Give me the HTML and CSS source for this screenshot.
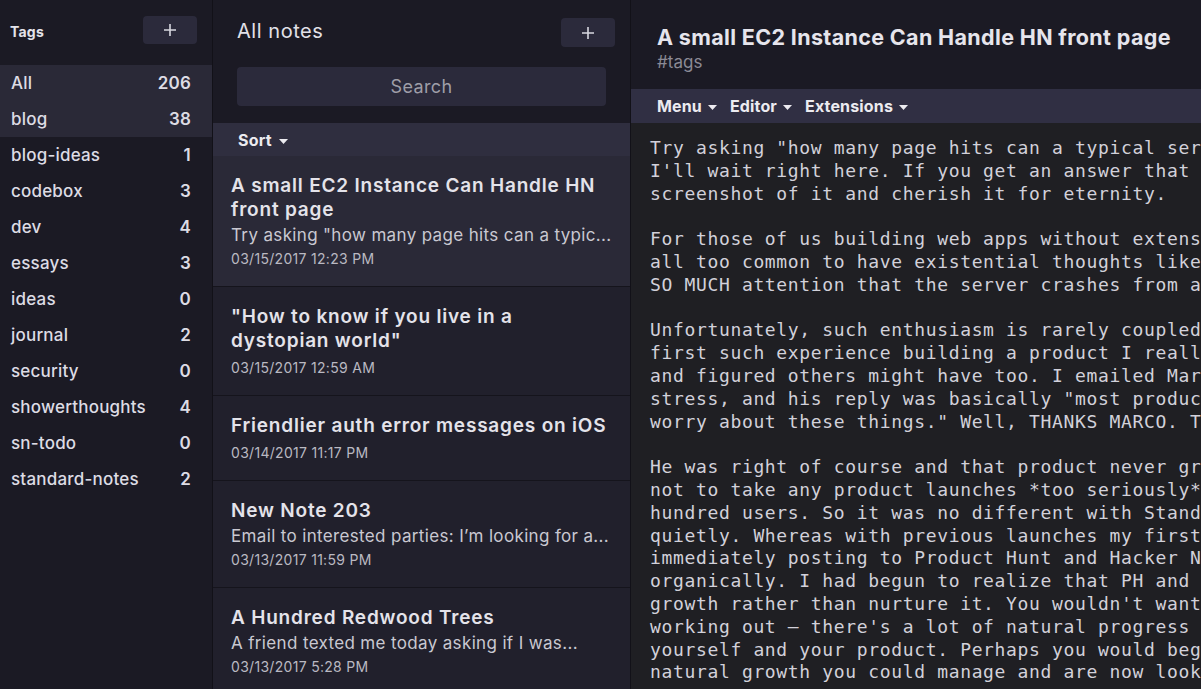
FILE: index.html
```html
<!DOCTYPE html>
<html lang="en">
<head>
<meta charset="utf-8">
<title>Notes</title>
<link rel="stylesheet" href="styles.css">
</head>
<body>
<div class="app">
  <aside class="tags">
    <div class="tags-head">
      <span class="tags-title">Tags</span>
      <button class="add add-tag" aria-label="Add tag"><svg width="14" height="14" viewBox="0 0 14 14"><path d="M7 1v12M1 7h12" stroke="currentColor" stroke-width="1.6"/></svg></button>
    </div>
    <ul class="tag-list">
      <li class="tag selected"><span class="tag-name">All</span><span class="tag-count">206</span></li>
      <li class="tag selected"><span class="tag-name">blog</span><span class="tag-count">38</span></li>
      <li class="tag"><span class="tag-name">blog-ideas</span><span class="tag-count">1</span></li>
      <li class="tag"><span class="tag-name">codebox</span><span class="tag-count">3</span></li>
      <li class="tag"><span class="tag-name">dev</span><span class="tag-count">4</span></li>
      <li class="tag"><span class="tag-name">essays</span><span class="tag-count">3</span></li>
      <li class="tag"><span class="tag-name">ideas</span><span class="tag-count">0</span></li>
      <li class="tag"><span class="tag-name">journal</span><span class="tag-count">2</span></li>
      <li class="tag"><span class="tag-name">security</span><span class="tag-count">0</span></li>
      <li class="tag"><span class="tag-name">showerthoughts</span><span class="tag-count">4</span></li>
      <li class="tag"><span class="tag-name">sn-todo</span><span class="tag-count">0</span></li>
      <li class="tag"><span class="tag-name">standard-notes</span><span class="tag-count">2</span></li>
    </ul>
  </aside>

  <section class="notes">
    <div class="notes-head">
      <div class="notes-top">
        <h2 class="notes-title">All notes</h2>
        <button class="add add-note" aria-label="New note"><svg width="14" height="14" viewBox="0 0 14 14"><path d="M7 1v12M1 7h12" stroke="currentColor" stroke-width="1.6"/></svg></button>
      </div>
      <div class="search">Search</div>
    </div>
    <div class="sort">Sort <svg class="caret" width="9" height="5" viewBox="0 0 9 5"><path d="M0 0h9L4.5 5z" fill="currentColor"/></svg></div>
    <ul class="note-list">
      <li class="note selected">
        <div class="note-title">A small EC2 Instance Can Handle HN front page</div>
        <div class="note-preview">Try asking "how many page hits can a typic...</div>
        <div class="note-date">03/15/2017 12:23 PM</div>
      </li>
      <li class="note">
        <div class="note-title">"How to know if you live in a dystopian world"</div>
        <div class="note-date">03/15/2017 12:59 AM</div>
      </li>
      <li class="note">
        <div class="note-title">Friendlier auth error messages on iOS</div>
        <div class="note-date">03/14/2017 11:17 PM</div>
      </li>
      <li class="note">
        <div class="note-title">New Note 203</div>
        <div class="note-preview">Email to interested parties: I’m looking for a...</div>
        <div class="note-date">03/13/2017 11:59 PM</div>
      </li>
      <li class="note">
        <div class="note-title">A Hundred Redwood Trees</div>
        <div class="note-preview">A friend texted me today asking if I was...</div>
        <div class="note-date">03/13/2017 5:28 PM</div>
      </li>
    </ul>
  </section>

  <main class="editor">
    <div class="ed-head">
      <h1 class="ed-title">A small EC2 Instance Can Handle HN front page</h1>
      <div class="ed-tags">#tags</div>
    </div>
    <nav class="toolbar">
      <span class="menu">Menu <svg class="caret" width="9" height="5" viewBox="0 0 9 5"><path d="M0 0h9L4.5 5z" fill="currentColor"/></svg></span>
      <span class="menu">Editor <svg class="caret" width="9" height="5" viewBox="0 0 9 5"><path d="M0 0h9L4.5 5z" fill="currentColor"/></svg></span>
      <span class="menu">Extensions <svg class="caret" width="9" height="5" viewBox="0 0 9 5"><path d="M0 0h9L4.5 5z" fill="currentColor"/></svg></span>
    </nav>
<pre class="ed-text">Try asking "how many page hits can a typical server handle?"
I'll wait right here. If you get an answer that makes sense, take a
screenshot of it and cherish it for eternity.

For those of us building web apps without extensive devops experience, it's
all too common to have existential thoughts like "what if my app gets
SO MUCH attention that the server crashes from all the traffic?"

Unfortunately, such enthusiasm is rarely coupled with reality. During my
first such experience building a product I really believed in, I worried
and figured others might have too. I emailed Marco Arment about the
stress, and his reply was basically "most products never get enough users to
worry about these things." Well, THANKS MARCO. That helps.

He was right of course and that product never grew. But I learned
not to take any product launches *too seriously* until they hit a few
hundred users. So it was no different with Standard Notes. I launched it
quietly. Whereas with previous launches my first instinct would have been
immediately posting to Product Hunt and Hacker News, I wanted to grow
organically. I had begun to realize that PH and HN only accelerate
growth rather than nurture it. You wouldn't want to put a baby on steroids.
working out – there's a lot of natural progress that comes from pacing
yourself and your product. Perhaps you would begin to see signs of the
natural growth you could manage and are now looking to speed things up.</pre>
  </main>
</div>
</body>
</html>
```

FILE: styles.css
```css
* { box-sizing: border-box; }

html, body {
  margin: 0;
  padding: 0;
  width: 1201px;
  height: 689px;
  overflow: hidden;
  background: #1b1a24;
  font-family: Inter, "Noto Sans", "Liberation Sans", sans-serif;
  color: #e2e1e8;
}

ul { list-style: none; margin: 0; padding: 0; }
h1, h2 { margin: 0; }

.app {
  display: flex;
  height: 689px;
}

/* ---------- Tags column ---------- */
.tags {
  width: 213px;
  flex: none;
  background: #1b1a24;
  border-right: 1px solid #121118;
}

.tags-head {
  height: 65px;
  display: flex;
  align-items: flex-start;
  justify-content: space-between;
  padding: 16px 15px 0 10px;
}

.tags-title {
  font-size: 14px;
  font-weight: 700;
  line-height: 32px;
  letter-spacing: 0.2px;
  color: #e4e3ea;
}

.add {
  border: 0;
  padding: 0;
  margin: 0;
  border-radius: 4px;
  background: #2b2a3b;
  color: #d8d7e0;
  display: flex;
  align-items: center;
  justify-content: center;
}

.add-tag {
  width: 54px;
  height: 28px;
}

.tag {
  height: 36px;
  display: flex;
  align-items: center;
  justify-content: space-between;
  padding: 0 21px 0 11px;
  font-size: 17px;
  font-weight: 500;
  letter-spacing: 0.2px;
  color: #dddce4;
}

.tag.selected { background: #2a2937; }

.tag-count { font-weight: 600; }

/* ---------- Notes column ---------- */
.notes {
  width: 418px;
  flex: none;
  display: flex;
  flex-direction: column;
  background: #21202c;
  border-right: 1px solid #121118;
  overflow: hidden;
}

.notes-head {
  flex: none;
  background: #1b1a24;
  height: 123px;
  padding: 18px 15px 0 24px;
}

.notes-top {
  display: flex;
  justify-content: space-between;
  align-items: flex-start;
}

.notes-title {
  font-size: 20px;
  font-weight: 400;
  line-height: 27px;
  letter-spacing: 0.55px;
  color: #e2e1e8;
}

.add-note {
  width: 54px;
  height: 29px;
}

.search {
  margin-top: 20px;
  width: 369px;
  height: 39px;
  border-radius: 4px;
  background: #2b2a3b;
  color: #9f9ea8;
  font-size: 18px;
  letter-spacing: 0.35px;
  display: flex;
  align-items: center;
  justify-content: center;
}

.sort {
  flex: none;
  height: 33px;
  background: #2f2e3f;
  display: flex;
  align-items: center;
  gap: 7px;
  padding: 1px 0 0 25px;
  font-size: 16px;
  font-weight: 700;
  letter-spacing: 0.2px;
  color: #ecebf0;
}

.caret { margin-top: 2px; }

.note-list {
  flex: 1;
  min-height: 0;
  overflow: hidden;
}

.note {
  padding: 18px 18px 17px 18px;
  border-bottom: 1px solid #15141c;
}

.note.selected { background: #2a2937; }

.note-title {
  font-size: 19px;
  font-weight: 600;
  line-height: 24px;
  letter-spacing: 0.8px;
  color: #e4e3ea;
}

.note-preview {
  font-size: 17px;
  line-height: 24px;
  letter-spacing: 0.35px;
  margin-top: 1px;
  margin-bottom: -3px;
  color: #c9c8d1;
  white-space: nowrap;
  overflow: hidden;
  text-overflow: ellipsis;
}

.note-date {
  font-size: 14px;
  line-height: 20px;
  letter-spacing: 0.3px;
  margin-top: 5px;
  color: #bab9c2;
}

/* ---------- Editor ---------- */
.editor {
  flex: 1;
  min-width: 0;
  display: flex;
  flex-direction: column;
  background: #1f1f23;
}

.ed-head {
  flex: none;
  height: 89px;
  background: #1b1a24;
  padding: 24px 0 0 26px;
}

.ed-title {
  font-size: 21.5px;
  font-weight: 700;
  line-height: 27px;
  letter-spacing: 0.35px;
  color: #e6e5ec;
  white-space: nowrap;
}

.ed-tags {
  margin-top: 0;
  font-size: 17px;
  line-height: 22px;
  color: #8b8a95;
}

.toolbar {
  flex: none;
  height: 34px;
  background: #302f43;
  display: flex;
  align-items: center;
  gap: 13px;
  padding-left: 26px;
  font-size: 16px;
  font-weight: 700;
  letter-spacing: 0.15px;
  color: #ecebf0;
}

.menu {
  display: flex;
  align-items: center;
  gap: 6px;
}

.ed-text {
  margin: 0;
  padding: 14px 0 0 19px;
  font-family: "DejaVu Sans Mono", "Liberation Mono", monospace;
  font-size: 18px;
  letter-spacing: 0.65px;
  line-height: 22.8px;
  color: #d2d1da;
  white-space: pre;
  overflow: hidden;
  flex: 1;
  min-height: 0;
}
```
